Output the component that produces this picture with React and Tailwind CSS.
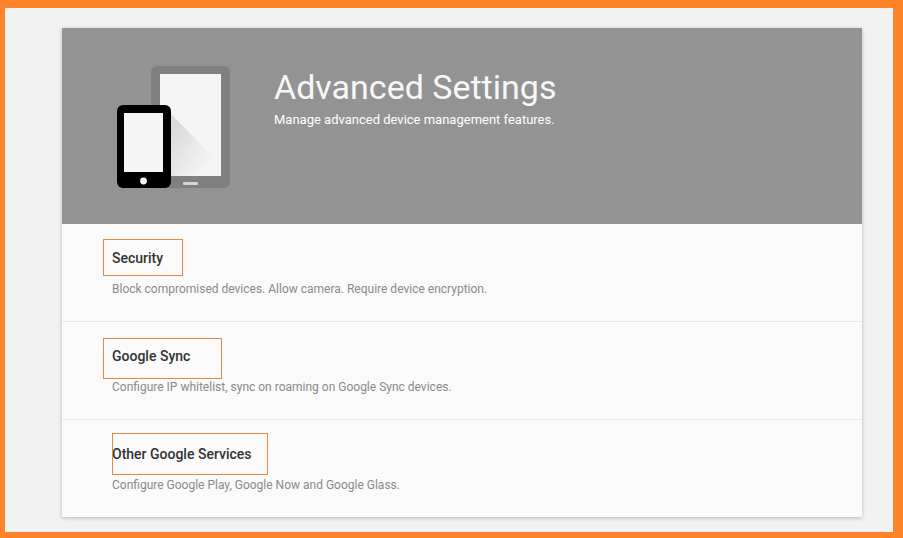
const rows = [
  {
    title: "Security",
    text: "Block compromised devices. Allow camera. Require device encryption.",
    box: "left-[-9px] top-[-9px] w-[80px] h-[37px]",
  },
  {
    title: "Google Sync",
    text: "Configure IP whitelist, sync on roaming on Google Sync devices.",
    box: "left-[-9px] top-[-8px] w-[119px] h-[41px]",
  },
  {
    title: "Other Google Services",
    text: "Configure Google Play, Google Now and Google Glass.",
    box: "left-0 top-[-11px] w-[156px] h-[42px]",
  },
];

function DevicesIcon() {
  return (
    <svg width="116" height="124" viewBox="0 0 116 124" className="shrink-0">
      <defs>
        <linearGradient id="fold" x1="0.1" y1="0.2" x2="0.8" y2="0.8">
          <stop offset="0" stopColor="#dadada" />
          <stop offset="1" stopColor="#f5f5f5" />
        </linearGradient>
      </defs>
      {/* tablet */}
      <rect x="34" y="0" width="79" height="122" rx="6" fill="#808080" />
      <rect x="43" y="8" width="61" height="102" fill="#f5f5f5" />
      <path d="M53 47 L104 99 L104 110 L53 110 Z" fill="url(#fold)" />
      <rect x="66" y="116" width="15" height="3" rx="1" fill="#d4d4d4" />
      {/* phone */}
      <rect x="0" y="39" width="54" height="83" rx="6" fill="#000000" />
      <rect x="7" y="47" width="39" height="59" fill="#f5f5f5" />
      <circle cx="26.5" cy="115" r="3.4" fill="#f5f5f5" />
    </svg>
  );
}

export default function App() {
  return (
    <div className="w-[903px] h-[538px] overflow-hidden bg-[#f2f2f2] border-solid border-[#ff8329] border-t-[8px] border-l-[5px] border-r-[10px] border-b-[6px] pt-[20px] pl-[57px] font-['Roboto',sans-serif]">
      <div className="w-[800px] h-[489px] bg-[#fafafa] shadow-[0_1px_4px_rgba(0,0,0,0.25)]">
        <div className="h-[196px] bg-[#939393] flex items-start pl-[55px] pt-[38px]">
          <DevicesIcon />
          <div className="ml-[41px] mt-[-1px] text-white">
            <h1 className="text-[34px] leading-[44px] font-normal text-[#f7f7f7]">Advanced Settings</h1>
            <p className="text-[13px] leading-[18px] mt-[2px]">Manage advanced device management features.</p>
          </div>
        </div>
        {rows.map((row, i) => (
          <div
            key={row.title}
            className={`h-[98px] pl-[50px] pt-[24px] ${i < 2 ? "border-b border-[#e8e8e8]" : ""}`}
          >
            <div className="relative">
              <h2 className="text-[14px] leading-[20px] font-medium text-[#333333]">{row.title}</h2>
              <div className={`absolute border border-[#e08a46] ${row.box}`} />
            </div>
            <p className="mt-[13px] text-[12px] leading-[16px] text-[#8a8a8a]">{row.text}</p>
          </div>
        ))}
      </div>
    </div>
  );
}
